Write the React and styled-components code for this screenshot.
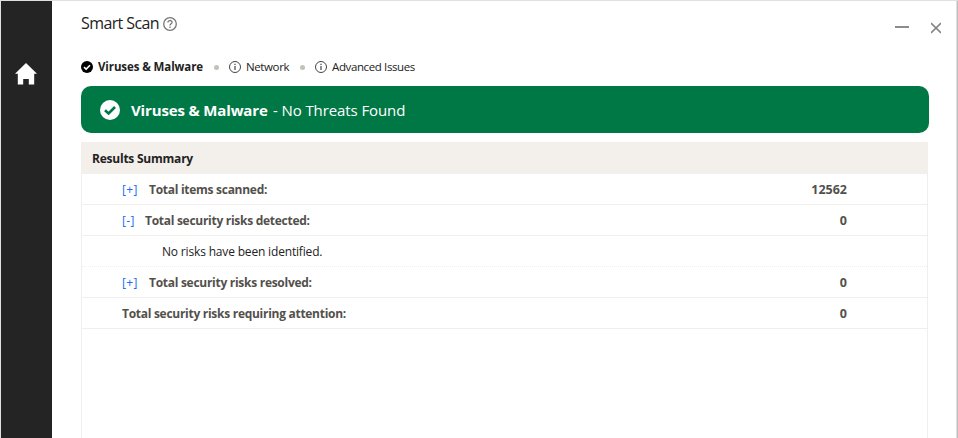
import React from "react";
import styled, { createGlobalStyle } from "styled-components";

const GlobalStyle = createGlobalStyle`
  * { box-sizing: border-box; }
  body {
    margin: 0;
    background: #fff;
    font-family: "Open Sans", "Noto Sans", sans-serif;
    color: #222;
    overflow: hidden;
  }
`;

const Window = styled.div`
  display: flex;
  width: 958px;
  height: 438px;
  border-top: 1px solid #dfe1e0;
  border-left: 1px solid #dfe1e0;
  background: #fff;
`;

const Sidebar = styled.nav`
  flex: 0 0 51px;
  padding: 62px 0 0 14px;
  background: #242424;
  svg { display: block; }
`;

const Main = styled.main`
  flex: 1;
  display: flex;
  flex-direction: column;
  padding: 0 27px 0 29px;
`;

const Edge = styled.div`
  flex: 0 0 2px;
  border-left: 1px solid #e0e0e0;
  background: #bdbdbd;
`;

const Text = styled.span`
  font-size: ${(p) => p.$size || 12}px;
  font-weight: ${(p) => p.$weight || 400};
  letter-spacing: ${(p) => p.$track || 0}px;
  color: ${(p) => p.$color || "#222"};
  line-height: 20px;
  white-space: pre;
`;

const TitleBar = styled.header`
  display: flex;
  height: 47px;
  padding-top: 12px;
  svg { display: block; }
`;

const Title = styled.h1`
  width: 82px;
  margin: 0;
  line-height: 20px;
  display: flex;
`;

const HelpIcon = styled.div`
  padding-top: 4px;
`;

const WindowButtons = styled.div`
  display: flex;
  gap: 22px;
  margin-left: auto;
  padding: 9px 15px 0 0;
  margin-right: -27px;
`;

const Steps = styled.div`
  display: flex;
  align-items: center;
  height: 38px;
  svg { display: block; }
`;

const Step = styled.div`
  display: flex;
  align-items: center;
  gap: 5px;
  width: ${(p) => p.$width}px;
`;

const Dot = styled.i`
  width: 5px;
  height: 5px;
  margin-right: ${(p) => p.$gap}px;
  border-radius: 50%;
  background: #c4c1ba;
`;

const Banner = styled.section`
  display: flex;
  align-items: center;
  width: 848px;
  height: 47px;
  padding: 0 19px;
  border-radius: 10px;
  background: #007845;
  svg { margin-right: 11px; }
`;

const BannerName = styled.div`
  width: 142px;
  display: flex;
`;

const BannerStatus = styled.div`
  display: flex;
`;

const Table = styled.section`
  flex: 1;
  width: 847px;
  margin-top: 9px;
  border: 1px solid #f1efec;
  border-top: 0;
  border-bottom: 0;
`;

const TableHead = styled.div`
  display: flex;
  align-items: center;
  height: 32px;
  margin: 0 -1px;
  padding: 1px 0 0 11px;
  background: #f3efea;
`;

const Row = styled.div`
  display: flex;
  align-items: center;
  height: 31px;
  padding: 2px 80px 0 ${(p) => p.$indent || 40}px;
  border-bottom: 1px ${(p) => (p.$dotted ? "dotted" : "solid")} #f1efec;
`;

const Toggle = styled.a`
  display: flex;
  width: ${(p) => p.$width}px;
`;

const Value = styled.div`
  display: flex;
  margin-left: auto;
`;

const CheckCircle = ({ size, fill, mark }) => (
  <svg width={size} height={size} viewBox="0 0 20 20">
    <circle cx="10" cy="10" r="10" fill={fill} />
    <path d="M5 10.2 8.6 13.5 15 7" fill="none" stroke={mark} strokeWidth="2.6" />
  </svg>
);

const InfoIcon = () => (
  <svg width="12" height="12" viewBox="0 0 12 12">
    <circle cx="6" cy="6" r="5.5" fill="none" stroke="#444" strokeWidth="1" />
    <path d="M6 5v4" stroke="#444" strokeWidth="1.2" />
    <path d="M6 2.8v1.2" stroke="#444" strokeWidth="1.2" />
  </svg>
);

const rows = [
  { toggle: "[+]", toggleWidth: 27, label: "Total items scanned:", value: "12562" },
  { toggle: "[-]", toggleWidth: 23, label: "Total security risks detected:", value: "0" },
  { detail: "No risks have been identified." },
  { toggle: "[+]", toggleWidth: 27, label: "Total security risks resolved:", value: "0" },
  { label: "Total security risks requiring attention:", value: "0" },
];

export default function App() {
  return (
    <>
      <GlobalStyle />
      <Window>
        <Sidebar>
          <svg width="22" height="22" viewBox="0 0 22 22">
            <path d="M11 0 22 10.8H19.2V21.5H13.8V16H8.2V21.5H2.8V10.8H0Z" fill="#fff" />
          </svg>
        </Sidebar>
        <Main>
          <TitleBar>
            <Title><Text $size={16} $track={-0.6}>Smart Scan</Text></Title>
            <HelpIcon>
              <svg width="14" height="14" viewBox="0 0 14 14" fill="none" stroke="#777">
                <circle cx="7" cy="7" r="6.3" strokeWidth="1.3" />
                <path d="M4.9 5.5C4.9 2.9 9.1 2.9 9.1 5.3 9.1 6.7 7 6.8 7 8.5M7 9.6v1.4" strokeWidth="1.3" />
              </svg>
            </HelpIcon>
            <WindowButtons>
              <svg width="14" height="12" viewBox="0 0 14 12"><path d="M0 5h14" stroke="#8c8c8c" strokeWidth="2" /></svg>
              <svg width="10" height="12" viewBox="0 0 10 12"><path d="M0 1 10 11M10 1 0 11" stroke="#858585" strokeWidth="1.6" /></svg>
            </WindowButtons>
          </TitleBar>
          <Steps>
            <Step $width={133}>
              <CheckCircle size={12} fill="#000" mark="#fff" />
              <Text $size={11.5} $weight={700} $track={-0.1}>Viruses &amp; Malware</Text>
            </Step>
            <Dot $gap={10} />
            <Step $width={71}>
              <InfoIcon />
              <Text $size={11.5} $track={-0.38}>Network</Text>
            </Step>
            <Dot $gap={10} />
            <Step $width={110}>
              <InfoIcon />
              <Text $size={11.5} $track={-0.38}>Advanced Issues</Text>
            </Step>
          </Steps>
          <Banner>
            <CheckCircle size={20} fill="#fff" mark="#007845" />
            <BannerName>
              <Text $size={15} $weight={700} $color="#fff" $track={-0.15}>Viruses &amp; Malware</Text>
            </BannerName>
            <BannerStatus>
              <Text $size={15} $color="#fff" $track={-0.1}>- No Threats Found</Text>
            </BannerStatus>
          </Banner>
          <Table>
            <TableHead>
              <Text $weight={700} $track={-0.23}>Results Summary</Text>
            </TableHead>
            {rows.map((row, i) =>
              row.detail ? (
                <Row key={i} $indent={80} $dotted>
                  <Text $track={-0.17}>{row.detail}</Text>
                </Row>
              ) : (
                <Row key={i}>
                  {row.toggle && (
                    <Toggle $width={row.toggleWidth}><Text $color="#1a6df0" $track={0.4}>{row.toggle}</Text></Toggle>
                  )}
                  <Text $weight={700} $color="#53504b" $track={-0.28}>{row.label}</Text>
                  <Value><Text $size={12.5} $weight={700} $color="#53504b">{row.value}</Text></Value>
                </Row>
              )
            )}
          </Table>
        </Main>
        <Edge />
      </Window>
    </>
  );
}
